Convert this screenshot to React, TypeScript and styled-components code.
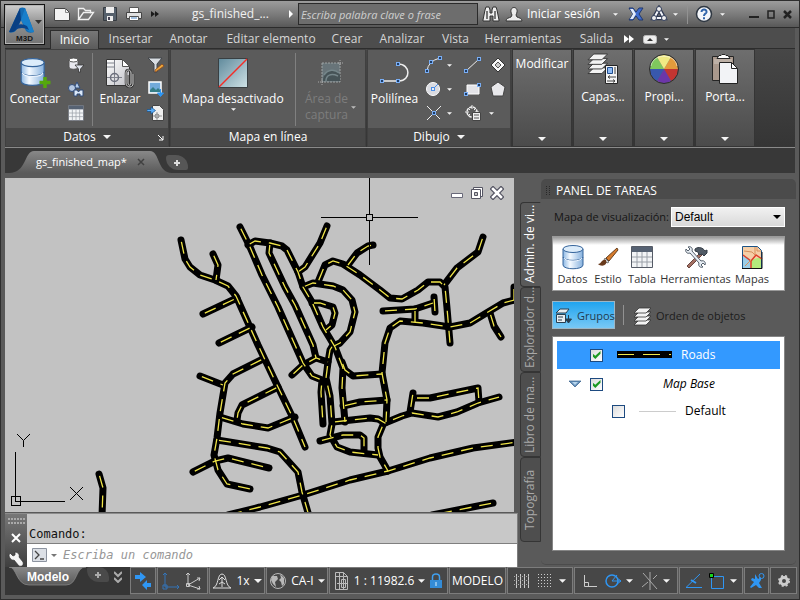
import React, { useState } from "react";
import styled, { createGlobalStyle, css } from "styled-components";

const Global = createGlobalStyle`
  * { box-sizing: border-box; }
  html, body { margin: 0; background: #5a5a5a; }
  body, button, input, select {
    font-family: "Open Sans", "Noto Sans", sans-serif;
    font-size: 12px;
    line-height: 16px;
  }
  button { border: 0; padding: 0; margin: 0; background: none; color: inherit; white-space: nowrap; }
  svg { display: block; flex: none; }
`;

/* ---------- window ---------- */

const Window = styled.div`
  position: relative;
  display: flex;
  flex-direction: column;
  height: 100vh;
  min-height: 600px;
  min-width: 800px;
  overflow: hidden;
  background: #5a5a5a;
  color: #fff;
  border: 1px solid #2e2e2e;
`;

const TitleBar = styled.header`
  display: flex;
  align-items: center;
  flex: none;
  height: 27px;
  padding: 0 3px 0 49px;
  background: linear-gradient(#9c9c9c, #7c7c7c 50%, #585858);
  border-bottom: 1px solid #2c2c2c;
`;

const AppButton = styled.button`
  position: absolute;
  left: 3px;
  top: 3px;
  z-index: 2;
  display: flex;
  flex-direction: column;
  align-items: center;
  width: 41px;
  height: 41px;
  padding-top: 2px;
  border: 1px solid #141414;
  background: linear-gradient(#cfcfcf, #8f8f8f 50%, #747474);
  box-shadow: inset 0 0 0 1px #b4b4b4;
  color: #151515;
  font: bold 8px/9px "Liberation Sans", sans-serif;
`;

const BarButton = styled.button<{ $w: number; $h?: number }>`
  display: flex;
  align-items: center;
  justify-content: center;
  flex: none;
  width: ${(p) => p.$w}px;
  height: ${(p) => p.$h ?? 24}px;
`;

const DocTitle = styled.div`
  flex: 1;
  min-width: 0;
  padding-left: 13px;
  text-align: center;
  color: #f0f0f0;
  white-space: nowrap;
`;

const Search = styled.input`
  flex: none;
  width: 180px;
  height: 22px;
  padding: 0 2px;
  border: 1px solid #2b2b2b;
  background: #6d6d6d;
  color: #fff;
  font-style: italic;
  font-size: 11px;
  &::placeholder { color: #cfcfcf; opacity: 1; }
`;

const SignIn = styled.button`
  display: flex;
  align-items: center;
  flex: none;
  gap: 4px;
  width: 104px;
  padding-left: 2px;
`;

const Separator = styled.span`
  flex: none;
  width: 1px;
  height: 20px;
  margin: 0 5px;
  background: #929292;
`;

const WindowControls = styled.div`
  display: flex;
  margin-left: 16px;
`;

/* ---------- ribbon ---------- */

const Menu = styled.nav`
  display: flex;
  align-items: flex-end;
  flex: none;
  height: 21px;
  margin: 0 4px;
  padding-left: 45px;
  background: #4d4d4d;
  border-bottom: 1px solid #2d2d2d;
`;

const MenuTab = styled.button<{ $w: number; $active?: boolean }>`
  flex: none;
  width: ${(p) => p.$w}px;
  height: 18px;
  color: #d6d6d6;
  ${(p) =>
    p.$active &&
    css`
      height: 19px;
      margin-bottom: -1px;
      padding-bottom: 2px;
      line-height: 15px;
      color: #fff;
      border: 1px solid #2d2d2d;
      border-bottom: 0;
      background: linear-gradient(#777, #5b5b5b);
    `}
`;

const Ribbon = styled.section`
  display: flex;
  flex: none;
  gap: 1px;
  height: 99px;
  margin: 0 4px;
  background: linear-gradient(#474747, #353535);
  border-bottom: 1px solid #8a8a8a;
`;

const Panel = styled.div<{ $w: number }>`
  display: flex;
  flex-direction: column;
  flex: none;
  width: ${(p) => p.$w}px;
  background: #5b5b5b;
  border: 1px solid #404040;
`;

const PanelBody = styled.div`
  display: flex;
  flex: 1;
  padding-top: 3px;
`;

const PanelFooter = styled.button`
  display: flex;
  align-items: center;
  justify-content: center;
  position: relative;
  gap: 7px;
  height: 18px;
  background: #484848;
`;

const Launcher = styled.span`
  position: absolute;
  right: 4px;
  top: 7px;
`;

const BigButton = styled.button<{ $w: number; $dim?: boolean }>`
  display: flex;
  flex-direction: column;
  align-items: center;
  flex: none;
  gap: 1px;
  width: ${(p) => p.$w}px;
  padding-top: 2px;
  color: ${(p) => (p.$dim ? "#7d7d7d" : "#fff")};
`;

const BigIcon = styled.span`
  display: flex;
  align-items: center;
  justify-content: center;
  height: 35px;
`;

const BigCaption = styled.span`
  display: flex;
  align-items: center;
  gap: 3px;
  white-space: pre;
  line-height: 16px;
`;

const Tools = styled.div<{ $cols: string }>`
  display: grid;
  grid-template-columns: ${(p) => p.$cols};
  grid-auto-rows: 24px;
  align-content: start;
  flex: none;
`;

const Tool = styled.button<{ $start?: boolean }>`
  display: flex;
  align-items: center;
  justify-content: ${(p) => (p.$start ? "flex-start" : "center")};
  gap: 4px;
`;

const Divider = styled.span`
  flex: none;
  width: 1px;
  height: 73px;
  background: #808080;
`;

const FoldedPanel = styled.button`
  display: flex;
  flex-direction: column;
  align-items: center;
  flex: none;
  width: 60px;
  height: 98px;
  padding: 6px 0 5px;
  overflow: hidden;
  border: 1px solid #353535;
  background: linear-gradient(#6e6e6e, #4b4b4b);
  & > :last-child { margin-top: auto; }
`;

const FoldedIcon = styled.span`
  display: flex;
  align-items: center;
  height: 32px;
  margin: -3px 0 4px;
`;

/* ---------- document tabs ---------- */

const DocTabs = styled.div`
  display: flex;
  align-items: flex-end;
  flex: none;
  height: 30px;
  margin: 0 4px;
  background: #383838;
  border-bottom: 5px solid #5a5a5a;
`;

const DocTab = styled.button`
  position: relative;
  display: flex;
  align-items: center;
  gap: 10px;
  width: 159px;
  height: 22px;
  padding-left: 31px;
  font-size: 11px;
  & > svg:first-child { position: absolute; left: 0; top: 0; }
  & > * { position: relative; }
`;

const NewTab = styled.button<{ $dark?: boolean }>`
  display: flex;
  align-items: center;
  justify-content: center;
  width: 22px;
  height: 15px;
  margin: 0 0 3px 2px;
  border-radius: ${(p) => (p.$dark ? "2px 10px 2px 12px" : "3px 12px 2px 12px")};
  background: ${(p) => (p.$dark ? "#4a4a4a" : "#565656")};
`;

/* ---------- work area ---------- */

const Work = styled.main`
  display: flex;
  flex: 1;
  min-height: 0;
  margin-left: 4px;
`;

const Left = styled.div`
  display: flex;
  flex-direction: column;
  flex: 1;
  min-width: 0;
`;

const Canvas = styled.div`
  position: relative;
  flex: 1;
  min-height: 0;
  margin-right: 4px;
  background: #c2c2c2;
  & > svg { width: 100%; height: 100%; }
`;

const CanvasControls = styled.div`
  position: absolute;
  top: 3px;
  right: 10px;
  display: flex;
  gap: 6px;
`;

const Command = styled.section`
  display: flex;
  flex: none;
  height: 54px;
  margin-top: 1px;
  border-top: 1px solid #8c8c8c;
  border-right: 1px solid #7d7d7d;
  font-family: "DejaVu Sans Mono", monospace;
`;

const CommandGutter = styled.div`
  display: flex;
  flex-direction: column;
  align-items: center;
  justify-content: space-between;
  width: 22px;
  padding: 4px 0 0;
  background: linear-gradient(#777, #3f3f3f);
`;

const CommandLines = styled.div`
  display: flex;
  flex-direction: column;
  flex: 1;
`;

const History = styled.div`
  flex: 1;
  padding: 12px 2px 0;
  background: #c8c8c8;
  color: #111;
  border-bottom: 1px solid #7f7f7f;
`;

const Prompt = styled.label`
  display: flex;
  align-items: center;
  gap: 3px;
  height: 23px;
  padding: 0 0 1px 5px;
  background: #fff;
`;

const CommandInput = styled.input`
  flex: 1;
  min-width: 0;
  height: 18px;
  padding: 0 3px;
  border: 0;
  font-family: "DejaVu Sans Mono", monospace;
  &::placeholder { color: #969696; font-style: italic; opacity: 1; }
`;

/* ---------- task pane ---------- */

const TaskArea = styled.aside`
  display: flex;
  flex: none;
  width: 281px;
  padding: 1px 3px 2px 2px;
`;

const SideTabs = styled.div`
  display: flex;
  flex-direction: column;
  width: 21px;
  padding-top: 23px;
`;

const SideTab = styled.button<{ $active?: boolean }>`
  height: 85px;
  writing-mode: vertical-rl;
  transform: rotate(180deg);
  padding: 3px 0 3px 2px;
  text-align: center;
  border: 1px solid #353535;
  border-radius: 0 4px 4px 0;
  background: ${(p) => (p.$active ? "#5a5a5a" : "#4e4e4e")};
  color: ${(p) => (p.$active ? "#fff" : "#a9a9a9")};
  ${(p) => p.$active && "border-left-color: #5a5a5a;"}
`;

const TaskPane = styled.div`
  display: flex;
  flex-direction: column;
  flex: 1;
  min-width: 0;
  border-bottom: 1px solid #4c4c4c;
  border-radius: 5px;
`;

const PaneTitle = styled.h2`
  display: flex;
  align-items: center;
  gap: 6px;
  height: 20px;
  margin: 0;
  padding: 3px 5px 0;
  font-size: 12px;
  font-weight: 400;
  background: #4b4b4b;
  border-radius: 5px 5px 0 0;
`;

const PaneBody = styled.div`
  display: flex;
  flex-direction: column;
  flex: 1;
  min-height: 0;
  padding: 8px 11px 13px 11px;
  color: #151515;
`;

const MapRow = styled.label`
  display: flex;
  align-items: center;
  justify-content: space-between;
  padding-left: 2px;
  font-size: 11px;
  white-space: nowrap;
`;

const SelectBox = styled.span`
  position: relative;
  display: flex;
  & > svg { position: absolute; right: 4px; top: 8px; pointer-events: none; }
`;

const MapSelect = styled.select`
  appearance: none;
  width: 114px;
  height: 20px;
  padding: 0 3px;
  border: 1px solid #fff;
  border-radius: 0;
  background: linear-gradient(#f1f1f1, #d9d9d9);
  color: #000;
  font-family: "Liberation Sans", sans-serif;
`;

const PaneTools = styled.div`
  display: flex;
  height: 55px;
  margin-top: 9px;
  padding: 6px 0 0 2px;
  border: 1px solid #9a9a9a;
  background: linear-gradient(#989898, #fff 8px);
`;

const PaneTool = styled.button<{ $w: number }>`
  display: flex;
  flex-direction: column;
  align-items: center;
  gap: 1px;
  width: ${(p) => p.$w}px;
  font-size: 11px;
  color: #333;
  & > svg { margin-top: 1px; }
`;

const ViewRow = styled.div`
  display: flex;
  align-items: center;
  gap: 3px;
  height: 28px;
  margin: 10px 0 7px;
`;

const ViewButton = styled.button<{ $active?: boolean }>`
  display: flex;
  align-items: center;
  gap: 4px;
  height: 28px;
  padding: 2px 3px 0 2px;
  font-size: 11px;
  color: #1c1c1c;
  ${(p) =>
    p.$active &&
    css`
      width: 63px;
      background: linear-gradient(#20a4ef, #78c8f5);
      border: 1px solid #9cb6c5;
      color: #203a50;
    `}
`;

const Tree = styled.ul`
  flex: 1;
  margin: 0;
  padding: 4px;
  list-style: none;
  background: #fff;
  border: 1px solid #858585;
  color: #000;
`;

const TreeRow = styled.li<{ $indent: number; $selected?: boolean; $h: number }>`
  display: flex;
  align-items: center;
  height: ${(p) => p.$h}px;
  padding-left: ${(p) => p.$indent}px;
  background: ${(p) => (p.$selected ? "#3399ff" : "transparent")};
  color: ${(p) => (p.$selected ? "#fff" : "#000")};
`;

const TreeLabel = styled.label<{ $italic?: boolean }>`
  display: flex;
  align-items: center;
  gap: 9px;
  font-style: ${(p) => (p.$italic ? "italic" : "normal")};
  & > svg { margin-left: 5px; }
  & > span { margin-left: ${(p) => (p.$italic ? "51px" : "0")}; }
`;

const Check = styled.input`
  appearance: none;
  display: grid;
  place-items: center;
  width: 13px;
  height: 13px;
  margin: 0;
  border: 1px solid #1d4a80;
  background: linear-gradient(135deg, #dcdcdc, #fff);
  &:checked::before {
    content: "";
    width: 8px;
    height: 8px;
    background: #1c9a22;
    clip-path: polygon(0 30%, 35% 60%, 100% 0, 100% 35%, 35% 100%, 0 65%);
  }
`;

/* ---------- status bar ---------- */

const StatusBar = styled.footer`
  display: flex;
  align-items: flex-start;
  flex: none;
  height: 28px;
  margin: 0 2px 4px 4px;
  background: #363636;
`;

const ModelTab = styled.button`
  position: relative;
  width: 80px;
  height: 19px;
  padding-left: 6px;
  font: bold 12px/18px "Liberation Sans", sans-serif;
  & > svg { position: absolute; left: 0; top: 0; }
  & > span { position: relative; }
`;

const StatusTools = styled.div`
  display: flex;
  flex: 1;
  gap: 1px;
  height: 28px;
  margin-left: 4px;
  background: #5a5a5a;
`;

const StatusGroup = styled.div<{ $w: number; $grow?: boolean }>`
  display: flex;
  align-items: center;
  justify-content: space-evenly;
  flex: ${(p) => (p.$grow ? 1 : "none")};
  min-width: ${(p) => p.$w}px;
  height: 27px;
  border: 1px solid #7c7c7c;
  background: #474747;
`;

const StatusButton = styled.button`
  display: flex;
  align-items: center;
  gap: 4px;
`;

/* ---------- glyphs ---------- */

const Down = ({ s = 6, c = "#f4f4f4" }: { s?: number; c?: string }) => (
  <svg width={s} height={Math.ceil(s / 2)} viewBox="0 0 8 4"><path d="M0 0h8L4 4z" fill={c} /></svg>
);

const Svg = ({ w = 18, h = 18, children }: { w?: number; h?: number; children: React.ReactNode }) => (
  <svg width={w} height={h} viewBox={`0 0 ${w} ${h}`} fill="none">{children}</svg>
);

const Grip = ({ x, y }: { x: number; y: number }) => (
  <rect x={x - 1.5} y={y - 1.5} width="3" height="3" fill="#1f3d66" stroke="#79aef5" />
);

const Database = ({ plus }: { plus?: boolean }) => (
  <Svg w={plus ? 32 : 22} h={plus ? 32 : 26}>
    <defs>
      <linearGradient id="db" x1="0" x2="1">
        <stop offset="0" stopColor="#8db8e4" /><stop offset=".35" stopColor="#f5faff" /><stop offset="1" stopColor="#86b1de" />
      </linearGradient>
    </defs>
    <g transform={plus ? "translate(1 1) scale(1.15)" : "translate(0 1)"}>
      <path d="M1 4v16c0 5 20 5 20 0V4" fill="url(#db)" stroke="#35649b" />
      <ellipse cx="11" cy="4" rx="10" ry="3.5" fill="#dcecfa" stroke="#35649b" />
      <path d="M1 12c0 4.500 20 4.500 20 0" stroke="#35649b" />
      <path d="M2 13c1 4 17 4 18 0" stroke="#eef6ff" />
    </g>
    {plus && <path d="M26 20v11M20.500 25.500h11" stroke="#55a80c" strokeWidth="3.500" />}
  </Svg>
);

const TableGlyph = ({ w = 18, h = 16 }: { w?: number; h?: number }) => (
  <svg width={w} height={h} viewBox="0 0 22 22" preserveAspectRatio="none" fill="none">
    <path d="M.5.5h21v21H.5z" fill="#f2f4f6" stroke="#555b66" />
    <path d="M1 1h20v5H1z" fill="#566273" />
    <path d="M1 11h20M1 16h20M6 6v15M11 6v15M16 6v15" stroke="#9aa0a8" />
  </svg>
);

const PageGlyph = () => (
  <Svg w={30} h={32}>
    <defs><linearGradient id="sheet" x2="1" y2="1"><stop stopColor="#fff" /><stop offset="1" stopColor="#bfc0c6" /></linearGradient></defs>
    <path d="M1.500 2.500h16l7 7v19h-23z" fill="url(#sheet)" stroke="#333" />
    <path d="M17.500 2.500v7h7z" fill="#fff" stroke="#555" />
    <path d="M2 6h7M2 10h7M9.500 3v25M2 20.500h15" stroke="#7f828c" />
    <circle cx="9.500" cy="20.500" r="4" stroke="#6b6f7c" strokeWidth="1.500" />
    <path d="M23 18v8c0 3 3 3 3 0V16c0-4-5-4-5 0v10c0 5 7 5 7 1V17" stroke="#333" strokeWidth="2.500" />
    <path d="M23 18v8c0 3 3 3 3 0V16c0-4-5-4-5 0v10c0 5 7 5 7 1V17" stroke="#d6d6d6" />
  </Svg>
);

const Layers = ({ page }: { page?: boolean }) => (
  <Svg w={page ? 32 : 18} h={page ? 32 : 19}>
    <g transform={page ? "translate(1 1) scale(1.15)" : "translate(0 1)"}>
      {[12, 8, 4, 0].map((y) => (
        <path key={y} d={`M0 ${y + 5}L5 ${y}h12l-5 5z`} fill="#f3f3f3" stroke="#333" strokeWidth=".8" />
      ))}
    </g>
    {page && (
      <>
        <path d="M18.500 12.500h12v18h-12z" fill="#f4f4f4" stroke="#252525" />
        <path d="M20.500 14.500h5v6h-5z" fill="#8fbbf4" stroke="#1e4c8e" />
        <path d="M28 14v7" stroke="#9a9a9a" strokeWidth="2" />
        <path d="M21 24h8M20 28h8M23 22.500L21 24l2 1.500M26 26.500l2 1.500-2 1.500" stroke="#444" />
      </>
    )}
  </Svg>
);

const Wheel = () => {
  const colors = ["#e49b3c", "#c33531", "#6c36a8", "#3858ad", "#7fc75d", "#f0ea84"];
  const starts = [-60, 0, 60, 120, 180, 240];
  const order = [0, 1, 2, 3, 4, 5];
  const point = (deg: number) => {
    const a = (deg * Math.PI) / 180;
    return `${16 + 14 * Math.cos(a)} ${16 + 14 * Math.sin(a)}`;
  };
  return (
    <Svg w={32} h={32}>
      {order.map((i) => (
        <path key={i} d={`M16 16L${point(starts[i])}A14 14 0 0 1 ${point(starts[i] + 60)}z`} fill={colors[i]} />
      ))}
      <circle cx="16" cy="16" r="14.500" stroke="#2d2d2d" />
      <path d="M3 13C5 0 27 0 29 13" stroke="#fff" strokeOpacity=".5" />
    </Svg>
  );
};

const Clipboard = () => (
  <Svg w={28} h={32}>
    <path d="M1.500 3.500h21v24h-21z" fill="#a9988c" stroke="#262626" />
    <path d="M3 6h18v5H3z" fill="#bdb0a6" />
    <path d="M6 5.500l2-3h2l1-1h3l1 1h2l2 3z" fill="#fff" stroke="#262626" />
    <path d="M8.500 9.500h12l6 6v15h-18z" fill="#f2f3f6" stroke="#222" />
    <path d="M20.500 9.500v6h6z" fill="#fff" stroke="#222" />
  </Svg>
);

const Wrench = () => (
  <Svg w={16} h={16}><path d="M2 2l3 3 2-1V1c3 0 5 3 4 5l4 5c1 3-1 5-4 4L6 9C4 10 1 7 1 4z" fill="#f5f5f5" stroke="#333" strokeWidth=".7" /></Svg>
);

/* ---------- map ---------- */

const roads = [
  "181,240 185,259 190,267 200,275 215,280 228,286 236,296 258,345 278,387 293,418 305,447",
  "213,254 218,265 216,280", "203,314 237,298", "219,343 252,327",
  "240,227 250,247 262,275 278,307 295,345 303,363 312,376 322,380 321,392 323,424",
  "248,245 255,241 270,243 282,246 287,250 298,272 303,287 312,302 323,327 335,347 343,368 342,388 345,422",
  "270,243 269,253 285,287 295,305 313,345 316,358",
  "292,375 303,365 316,358 328,362",
  "333,345 330,350 328,362 326,378 330,396 332,424 330,435 337,447 350,452 378,455",
  "327,226 320,243 305,267 298,272",
  "303,287 313,283 333,286 343,290 352,300 355,312 350,332 340,343 334,346",
  "318,282 325,265 333,261 343,264 360,275 380,290 390,298 402,299 418,290 428,282 440,282 445,287 447,308 450,343",
  "373,245 368,246 357,253 348,265",
  "483,237 478,252 457,268 444,285",
  "312,303 320,303 333,307 335,313 332,325 326,330",
  "383,311 415,309 433,303", "434,297 435,312", "415,309 415,322",
  "518,299 503,303 488,312 470,323 450,327 423,323 400,321 390,328 385,343 382,373 387,400 386,422",
  "490,313 494,326 501,337", "514,287 514,300",
  "342,362 345,370 353,376 382,374",
  "343,406 360,402 387,400",
  "333,422 370,418 378,419 385,423 402,416 412,413 438,417 457,412 478,403 499,397",
  "413,393 410,412", "415,398 430,398 478,388 479,402",
  "383,425 378,437 378,448 380,457 388,471",
  "320,441 343,435 360,435 364,438 364,451",
  "263,359 233,374 225,383 220,413 217,438 214,455 218,470 227,484 250,489",
  "200,376 223,385", "278,387 242,405 238,413 237,420",
  "220,417 243,424 268,428 295,417",
  "217,440 267,448 280,452 298,472 302,492 309,516",
  "193,472 215,461 228,458 269,468",
  "228,515 260,507 303,495 350,480 388,471 430,458 473,448 518,442",
  "493,503 432,515", "99,474 103,488 102,516",
];

const Map = () => (
  <svg aria-label="gs_finished_map" fill="none">
    <g transform="translate(-5 -178)">
      <g stroke="#000" strokeWidth="7" strokeLinecap="round" strokeLinejoin="round">
        {roads.map((r) => <polyline key={r} points={r} />)}
      </g>
      <g stroke="#f0e548" strokeWidth="1.300" strokeDasharray="12 8" strokeDashoffset="-2">
        {roads.map((r) => <polyline key={r} points={r} />)}
      </g>
      <g stroke="#000" shapeRendering="crispEdges">
        <path d="M321 217.500H366M373 217.500H418M369.500 178V214M369.500 221V265M366.500 214.500h6v6h-6z" />
        <path d="M15.500 452V501.500H65M11.500 496.500h9v9h-9z" />
      </g>
      <path d="M17 434l6.500 6.500L30 434M23.500 440.500V447M70 487l13 13M83 487l-13 13" stroke="#000" />
    </g>
  </svg>
);

const blue = "#2f96f3";

export default function App() {
  const [checks, setChecks] = useState([true, true, false]);
  const toggle = (i: number) => setChecks(checks.map((v, n) => (n === i ? !v : v)));

  return (
    <>
      <Global />
      <Window>
        <AppButton aria-label="M3D">
          <Svg w={37} h={27}>
            <path d="M14 1L3 25q5 2 8-3l4-9 5 11q3 3 8 1L19 1q-3-1-5 0z" fill="#126bb4" />
            <path d="M14 1l1 12-5 10q-3 3-7 2z" fill="#083f83" />
            <path d="M19 1l9 24q-5 1-7-2l-6-10z" fill="#187fcb" />
            <path d="M11 18q5-2 10 1l2 4q-7-4-14 0z" fill="#0b438a" />
            <path d="M29 13h7l-3.500 4z" fill="#333" />
          </Svg>
          M3D
        </AppButton>

        <TitleBar>
          <BarButton $w={24} aria-label="Nuevo"><Svg><path d="M1.500 3.500h11l4 4v8h-15z" fill="#f3f3f3" stroke="#444" /><path d="M12.500 3.500v4h4" stroke="#888" /></Svg></BarButton>
          <BarButton $w={24} aria-label="Abrir"><Svg><path d="M1.500 14.500v-11h5l2 2h5v3M1.500 14.500l5-7h10l-5 7z" fill="#777" stroke="#f0f0f0" strokeWidth="1.300" /></Svg></BarButton>
          <BarButton $w={24} aria-label="Guardar"><Svg><path d="M2.500 2.500h13v13h-13z" fill="#56616d" stroke="#363b41" /><path d="M5 2h8v6H5zM6 11h6v5H6z" fill="#eee" /><path d="M7 12h2v3H7z" fill="#445" /></Svg></BarButton>
          <BarButton $w={24} aria-label="Imprimir"><Svg><path d="M4.500 2.500h9v5h-9z" fill="#fff" stroke="#555" /><path d="M1.500 7.500h15v6h-15z" fill="#e1e1e1" stroke="#444" /><path d="M4.500 11.500h9v4h-9z" fill="#fff" stroke="#555" /><path d="M6 13h6" stroke="#4b84c3" /></Svg></BarButton>
          <BarButton $w={18} aria-label="Más"><Svg w={8} h={6}><path d="M0 0l4 3-4 3zM4 0l4 3-4 3z" fill="#1b1b1b" /></Svg></BarButton>
          <DocTitle>gs_finished_...</DocTitle>
          <BarButton $w={14} aria-label="Expandir"><Svg w={4} h={8}><path d="M0 0l4 4-4 4z" fill="#fff" /></Svg></BarButton>
          <Search aria-label="Buscar" placeholder="Escriba palabra clave o frase" />
          <BarButton $w={25} aria-label="Buscar"><Svg><path d="M3 5l1-3h3l1 3v3h2V5l1-3h3l1 3 2 10v1h-6v-5H8v5H1v-1z" fill="#eee" stroke="#333" /><path d="M4 6h2v8H4zM12 6h2v8h-2z" fill="#777" /></Svg></BarButton>
          <SignIn><Svg><path d="M1 16c0-3 3-3 5-4l1-2c-5-10 9-10 4 0l1 2c2 1 5 1 5 4z" fill="#ededed" stroke="#363636" /></Svg>Iniciar sesión</SignIn>
          <BarButton $w={16} aria-label="Opciones de sesión"><Down s={5} /></BarButton>
          <BarButton $w={25} aria-label="Exchange"><Svg w={16} h={14}><path d="M1 1h4l3 4 3-4h4l-4 6 4 6h-4L8 9l-3 4H1l4-6z" fill="#3f6bcd" stroke="#20386e" /><path d="M2 2h3l3 5-3 5H2l3-5z" fill="#e4ecfb" /></Svg></BarButton>
          <BarButton $w={21} aria-label="A360"><Svg><path d="M9 4L4 13h10z" stroke="#2f3952" strokeWidth="4.500" /><path d="M9 4L4 13h10z" stroke="#f4f6fb" strokeWidth="2" /><g fill="#eee" stroke="#34405d"><circle cx="9" cy="4" r="2.500" /><circle cx="4" cy="13" r="2.500" /><circle cx="14" cy="13" r="2.500" /></g></Svg></BarButton>
          <BarButton $w={13} aria-label="Opciones de A360"><Down s={5} /></BarButton>
          <Separator />
          <BarButton $w={22} aria-label="Ayuda"><Svg><circle cx="9" cy="9" r="7.500" fill="#f4f6fa" stroke="#2e3742" strokeWidth="1.500" /><path d="M6.500 7C6.500 3.500 12 4 11.500 7.200 11 9 9 8.500 9 11M9 12.200v2" stroke="#3265aa" strokeWidth="2" /></Svg></BarButton>
          <BarButton $w={14} aria-label="Opciones de ayuda"><Down s={5} /></BarButton>
          <WindowControls>
            <BarButton $w={17} aria-label="Minimizar"><Svg w={10} h={10}><path d="M0 8h10" stroke="#222" strokeWidth="2" /></Svg></BarButton>
            <BarButton $w={17} aria-label="Maximizar"><Svg w={8} h={9}><path d="M1 1h6v7H1z" stroke="#222" strokeWidth="1.500" /></Svg></BarButton>
            <BarButton $w={17} aria-label="Cerrar"><Svg w={9} h={9}><path d="M1 1l7 7M8 1L1 8" stroke="#222" strokeWidth="2.500" /></Svg></BarButton>
          </WindowControls>
        </TitleBar>

        <Menu>
          <MenuTab $w={49} $active>Inicio</MenuTab>
          <MenuTab $w={63}>Insertar</MenuTab>
          <MenuTab $w={53}>Anotar</MenuTab>
          <MenuTab $w={112}>Editar elemento</MenuTab>
          <MenuTab $w={40}>Crear</MenuTab>
          <MenuTab $w={70}>Analizar</MenuTab>
          <MenuTab $w={37}>Vista</MenuTab>
          <MenuTab $w={98}>Herramientas</MenuTab>
          <MenuTab $w={49}>Salida</MenuTab>
          <BarButton $w={16} $h={18} aria-label="Más fichas"><Svg w={10} h={8}><path d="M0 0l5 4-5 4zM5 0l5 4-5 4z" fill="#fff" /></Svg></BarButton>
          <BarButton $w={26} $h={18} aria-label="Contraer cinta"><Svg w={14} h={9}><rect x=".5" y=".5" width="13" height="8" rx="2" fill="#eee" stroke="#bbb" /><path d="M4 6h6L7 3z" fill="#333" /></Svg></BarButton>
          <BarButton $w={6} $h={18} aria-label="Opciones de cinta"><Down s={5} /></BarButton>
        </Menu>

        <Ribbon>
          <Panel $w={164}>
            <PanelBody>
              <BigButton $w={58}><BigIcon><Database plus /></BigIcon><BigCaption>Conectar</BigCaption></BigButton>
              <Tools $cols="23px">
                <Tool aria-label="Filtrar datos"><Svg><path d="M2 4v7c0 3 9 3 9 0V4" fill="#e8e8ee" stroke="#555" /><ellipse cx="6.500" cy="4" rx="4.500" ry="2" fill="#fff" stroke="#555" /><path d="M8 9h9l-3.500 4v3h-2v-3z" fill="#dfe3ec" stroke="#333" strokeWidth=".8" /></Svg></Tool>
                <Tool aria-label="Buscar entidades"><Svg><path d="M10 2l3 6H7z" fill="#b5cdea" stroke="#2f4a78" /><circle cx="5" cy="8" r="3.500" fill="#b5c8e2" stroke="#2f4a78" /><path d="M7 16v-6h3l1.500 2L13 10h3v6h-3v-2h-3v2z" fill="#dce9f9" stroke="#2f4a78" /></Svg></Tool>
                <Tool aria-label="Tabla de datos"><TableGlyph w={16} h={16} /></Tool>
              </Tools>
              <Tools $cols="5px" />
              <Divider />
              <BigButton $w={54}><BigIcon><PageGlyph /></BigIcon><BigCaption>Enlazar</BigCaption></BigButton>
              <Tools $cols="18px">
                <Tool aria-label="Consulta"><Svg><path d="M1 2h14l-5 6v8H7V8z" fill="#d8dde2" stroke="#42464b" /><path d="M8 14l7-6 2 2-7 5-2 1z" fill="#eda63a" stroke="#8d4a20" strokeWidth=".8" /></Svg></Tool>
                <Tool aria-label="Insertar imagen"><Svg><path d="M2 2h12v11H2z" fill="#72aada" stroke="#fff" strokeWidth="1.500" /><path d="M3 10l3-3 3 3 2-2 2 2v2H3z" fill="#357e88" /><path d="M13.500 9v6M10.500 13l3 3.500 3-3.500z" fill={blue} stroke={blue} /></Svg></Tool>
                <Tool aria-label="Importar mapa"><Svg><path d="M5.500 1.500h7l4 4v11h-11z" fill="#eee" stroke="#444" /><circle cx="10" cy="12" r="2" stroke="#777" /><path d="M10 8v8M6 12h9" stroke="#999" /><path d="M0 5.500h4V3l4.500 3.500L4 10V7.500H0z" fill="#5baef9" stroke="#164e86" strokeWidth=".7" /></Svg></Tool>
              </Tools>
            </PanelBody>
            <PanelFooter>Datos <Down s={8} /><Launcher><Svg w={6} h={6}><path d="M0 0l5 5M5 1v4H1" stroke="#fff" /></Svg></Launcher></PanelFooter>
          </Panel>

          <Panel $w={196}>
            <PanelBody>
              <BigButton $w={124}><BigIcon><Svg w={32} h={32}><defs><linearGradient id="sky" x2="1" y2="1"><stop stopColor="#608a9c" /><stop offset="1" stopColor="#cfe2e6" /></linearGradient></defs><path d="M1.500 1.500h29v29h-29z" fill="url(#sky)" stroke="#393f42" /><path d="M2 30L30 2" stroke="#f52d26" strokeWidth="1.500" /></Svg></BigIcon><BigCaption>Mapa desactivado</BigCaption><Down s={5} /></BigButton>
              <Divider />
              <BigButton $w={69} $dim disabled><BigIcon><Svg w={26} h={26}><path d="M4 3h18v19H4z" fill="#687479" stroke="#9da3a4" strokeDasharray="2 1" /><path d="M5 20c1-13 15-12 17-5v6H5z" fill="#465357" /><path d="M6 15c4-6 11-6 15-2M8 21c0-6 5-8 12-5" stroke="#75868a" strokeWidth="1.500" /><path d="M4 20v6M0 22h5M22 0v5M20 3h5" stroke="#aaa" strokeDasharray="1 1" /></Svg></BigIcon><BigCaption>{"Área de\ncaptura"}<Down s={5} c="#bcbcbc" /></BigCaption></BigButton>
            </PanelBody>
            <PanelFooter>Mapa en línea</PanelFooter>
          </Panel>

          <Panel $w={144}>
            <PanelBody>
              <BigButton $w={53}><BigIcon><Svg w={32} h={28}><path d="M3 22h17c12 0 12-17-1-17" stroke="#eee" strokeWidth="1.500" /><Grip x={3} y={22} /><Grip x={19} y={22} /><Grip x={19} y={5} /></Svg></BigIcon><BigCaption>Polilínea</BigCaption></BigButton>
              <Tools $cols="35px 33px 17px">
                <Tool aria-label="Arco"><Svg><path d="M2 15Q3 5 15 2" stroke="#eee" /><Grip x={2} y={15} /><Grip x={6} y={6} /><Grip x={15} y={2} /></Svg><Down s={5} /></Tool>
                <Tool aria-label="Línea"><Svg><path d="M2 15L15 3" stroke="#eee" /><Grip x={2} y={15} /><Grip x={15} y={3} /></Svg></Tool>
                <Tool aria-label="Polígono de mapa"><Svg><path d="M9 2l7 7-7 7-7-7z" fill="#f7f7f7" stroke="#333" /><path d="M9 6l3 3-3 3-3-3z" fill="#ccc" stroke="#555" /></Svg></Tool>
                <Tool aria-label="Círculo"><Svg><circle cx="8" cy="9" r="6.500" fill="#dadbe1" stroke="#fff" /><path d="M8 9l5-5" stroke="#4b8ee7" /><rect x="6.500" y="7.500" width="3" height="3" fill="#e8eef8" stroke="#4b8ee7" /></Svg><Down s={5} /></Tool>
                <Tool aria-label="Rectángulo"><Svg><path d="M3 5h12v9H3z" fill="#e3e3e7" stroke="#fff" /><Grip x={2} y={14} /><Grip x={15} y={5} /></Svg></Tool>
                <Tool aria-label="Polígono"><Svg><path d="M9 2l7 5-2 9H4L2 7z" fill="#e8e8eb" stroke="#444" /></Svg></Tool>
                <Tool aria-label="Punto"><Svg><path d="M2 2l13 13M2 16L16 2" stroke="#eee" /><Grip x={9} y={9} /></Svg><Down s={5} /></Tool>
                <Tool aria-label="Coordenadas"><Svg><circle cx="8" cy="8" r="5" stroke="#eee" strokeWidth="1.500" strokeDasharray="3 1" /><path d="M8 1v4M1 8h4M11 8h4M4 4l2 2M12 4l-2 2M4 12l2-2" stroke="#eee" /><path d="M8.500 8.500h8v8h-8z" fill="#eee" stroke="#444" /><path d="M10 11h5M10 14h5" stroke="#555" /></Svg></Tool>
                <Tool $start aria-label="Más herramientas"><Down s={5} /></Tool>
              </Tools>
            </PanelBody>
            <PanelFooter>Dibujo <Down s={8} /></PanelFooter>
          </Panel>
          <FoldedPanel>Modificar<Down s={8} /></FoldedPanel>
          <FoldedPanel><FoldedIcon><Layers page /></FoldedIcon>Capas...<Down s={8} /></FoldedPanel>
          <FoldedPanel><FoldedIcon><Wheel /></FoldedIcon>Propi...<Down s={8} /></FoldedPanel>
          <FoldedPanel><FoldedIcon><Clipboard /></FoldedIcon>Porta...<Down s={8} /></FoldedPanel>
        </Ribbon>

        <DocTabs>
          <DocTab>
            <svg width="176" height="22" viewBox="0 0 176 22"><defs><linearGradient id="doc" x2="0" y2="1"><stop stopColor="#888" /><stop offset="1" stopColor="#5a5a5a" /></linearGradient></defs><path d="M4 22c18 0 15-22 25-22h116c10 0 7 22 22 22z" fill="url(#doc)" /></svg>
            <span>gs_finished_map*</span>
            <Svg w={8} h={8}><path d="M1 1l6 6M7 1L1 7" stroke="#414141" strokeWidth="1.500" /></Svg>
          </DocTab>
          <NewTab aria-label="Nuevo dibujo"><Svg w={8} h={8}><path d="M4 1v6M1 4h6" stroke="#ddd" strokeWidth="2" /></Svg></NewTab>
        </DocTabs>

        <Work>
          <Left>
            <Canvas>
              <Map />
              <CanvasControls>
                <BarButton $w={14} aria-label="Minimizar dibujo"><Svg w={14} h={14}><path d="M1.500 7.500h11v4h-11z" fill="#fff" stroke="#686878" /></Svg></BarButton>
                <BarButton $w={14} aria-label="Restaurar dibujo"><Svg w={14} h={14}><path d="M3.500 1.500h9v9h-9z" fill="#fff" stroke="#555563" /><path d="M1.500 3.500h9v9h-9z" fill="#fff" stroke="#555563" /><path d="M4.500 6.500h3v3h-3z" fill="#c2c2c2" stroke="#555563" /></Svg></BarButton>
                <BarButton $w={14} aria-label="Cerrar dibujo"><Svg w={14} h={14}><path d="M3 3l8 8M11 3l-8 8" stroke="#555563" strokeWidth="5" strokeLinecap="square" /><path d="M3 3l8 8M11 3l-8 8" stroke="#fff" strokeWidth="2.500" strokeLinecap="square" /></Svg></BarButton>
              </CanvasControls>
            </Canvas>
            <Command>
              <CommandGutter>
                <Svg w={18} h={6}><path d="M1 1h17M1 5h17" stroke="#aaa" strokeWidth="2" strokeDasharray="2 1" /></Svg>
                <button aria-label="Cerrar comando"><Svg w={10} h={10}><path d="M1 1l8 8M9 1L1 9" stroke="#fff" strokeWidth="2" /></Svg></button>
                <button aria-label="Personalizar"><Wrench /></button>
              </CommandGutter>
              <CommandLines>
                <History>Comando:</History>
                <Prompt>
                  <Svg w={16} h={14}><path d="M.5.5h14v13H.5z" fill="#dce0e6" stroke="#8d94a0" /><path d="M3 3l4 4-4 4M8 11h4" stroke="#444" strokeWidth="1.300" /></Svg>
                  <Down s={6} c="#777" />
                  <CommandInput aria-label="Comando" placeholder="Escriba un comando" />
                </Prompt>
              </CommandLines>
            </Command>
          </Left>

          <TaskArea>
            <SideTabs>
              <SideTab $active>Admin. de vi...</SideTab>
              <SideTab>Explorador d...</SideTab>
              <SideTab>Libro de ma...</SideTab>
              <SideTab>Topografía</SideTab>
            </SideTabs>
            <TaskPane>
              <PaneTitle><Svg w={4} h={10}><path d="M.5 0v10M3.500 0v10" stroke="#292929" strokeDasharray="1 1" /></Svg>PANEL DE TAREAS</PaneTitle>
              <PaneBody>
                <MapRow>
                  Mapa de visualización:
                  <SelectBox><MapSelect defaultValue="Default"><option>Default</option></MapSelect><Down s={8} c="#000" /></SelectBox>
                </MapRow>
                <PaneTools>
                  <PaneTool $w={35}><Database />Datos</PaneTool>
                  <PaneTool $w={36}><Svg w={22} h={26}><path d="M9 14L20 4l1 2-9 11z" fill="#d67b2c" stroke="#66401f" /><path d="M8 14l4 4-2 1-3-3z" fill="#ddd" stroke="#777" /><path d="M9 16c2 6-5 7-8 4 4 0 3-5 8-4z" fill="#693a1c" /></Svg>Estilo</PaneTool>
                  <PaneTool $w={32}><Svg w={22} h={26}><g transform="translate(0 2)"><TableGlyph w={22} h={22} /></g></Svg>Tabla</PaneTool>
                  <PaneTool $w={75}>
                    <Svg w={24} h={26}>
                      <path d="M3 22L16 9l2 2L5 24z" fill="#a47063" stroke="#6a4740" />
                      <path d="M11 5c4-3 8-1 10 2l2-1v3l-3 3-2-2-3 1-1-3-3-1z" fill="#515b66" stroke="#343c46" />
                      <path d="M2 5l2 2 2-2-2-2c3-1 5 1 4 4l9 10c3-1 5 1 4 4l-2-2-2 2 2 2c-3 1-5-1-4-4L6 9C3 10 1 8 2 5z" fill="#e7edf3" stroke="#56616d" />
                    </Svg>
                    Herramientas
                  </PaneTool>
                  <PaneTool $w={38}><Svg w={22} h={26}><path d="M1.500 2.500h15l4 4v18h-19z" fill="#f5cfa8" stroke="#1b5386" /><path d="M2 12l6 2 2 10H2z" fill="#9ccee8" /><path d="M10 16l10-3v11H10z" fill="#b3ea7c" /><path d="M2 11l8 6 5-6 6 4M10 17v8" stroke="#dd3e28" strokeWidth="1.500" /><path d="M3 7l8 1 3 3V3M4 22l6-6M16 3v4h4" stroke="#d7905d" /><path d="M1 24.500h20V8" stroke="#111" /></Svg>Mapas</PaneTool>
                </PaneTools>
                <ViewRow>
                  <ViewButton $active><Svg w={18} h={18}><path d="M1.500 7.500h9v8h-9zM1 6l4-4h9l-3 4z" fill="#e8eef2" stroke="#293f50" /><path d="M3 10h5M3 13h4M13.500 8v5M10.500 12l3 4 3-4z" fill="#293f50" stroke="#293f50" /></Svg>Grupos</ViewButton>
                  <Separator />
                  <ViewButton><Layers />Orden de objetos</ViewButton>
                </ViewRow>
                <Tree>
                  <TreeRow $indent={33} $h={28} $selected>
                    <TreeLabel><Check type="checkbox" checked={checks[0]} onChange={() => toggle(0)} /><Svg w={55} h={8}><path d="M0 0h55v7H0z" fill="#000" /><path d="M1 3.500h16M26 3.500h17M52 3.500h2" stroke="#f1e84b" /></Svg>Roads</TreeLabel>
                  </TreeRow>
                  <TreeRow $indent={12} $h={30}>
                    <Svg w={21} h={8}><path d="M0 1h12L6 7z" fill="#6691ba" stroke="#315b88" strokeWidth=".7" /><path d="M3 2h6L6 5z" fill="#b7d6ed" /></Svg>
                    <TreeLabel $italic><Check type="checkbox" checked={checks[1]} onChange={() => toggle(1)} /><span>Map Base</span></TreeLabel>
                  </TreeRow>
                  <TreeRow $indent={55} $h={24}>
                    <TreeLabel><Check type="checkbox" checked={checks[2]} onChange={() => toggle(2)} /><Svg w={37} h={8}><path d="M0 4.500h37" stroke="#ccc" /></Svg>Default</TreeLabel>
                  </TreeRow>
                </Tree>
              </PaneBody>
            </TaskPane>
          </TaskArea>
        </Work>

        <StatusBar>
          <ModelTab>
            <svg width="84" height="19" viewBox="0 0 84 19"><path d="M4 0c8 0 7 18 20 18h37c12 0 9-18 20-18z" fill="url(#doc)" stroke="#8c8c8c" strokeWidth=".7" /></svg>
            <span>Modelo</span>
          </ModelTab>
          <NewTab $dark aria-label="Nueva presentación"><Svg w={8} h={8}><path d="M4 1v6M1 4h6" stroke="#aaa" strokeWidth="2" /></Svg></NewTab>
          <BarButton $w={17} $h={20} aria-label="Más presentaciones"><Svg w={8} h={12}><path d="M0 1l4 4 4-4M0 7l4 4 4-4" stroke="#aaa" strokeWidth="2" /></Svg></BarButton>
          <StatusTools>
            <StatusGroup $w={26}><StatusButton aria-label="Sincronizar"><Svg><path d="M1 3h5V0l6 5-6 5V7H1zM17 11h-4V8l-5 5 5 5v-3h4z" fill={blue} /></Svg></StatusButton></StatusGroup>
            <StatusGroup $w={51}>
              <StatusButton aria-label="SCP"><Svg><path d="M3 1v14h14M1 13h4v4H1zM1 3l2-2 2 2M15 13l2 2-2 2" stroke="#3475b8" /></Svg></StatusButton>
              <StatusButton aria-label="Ejes"><Svg><path d="M3 1v12l12 4M3 13l12-7M1.500 11.500h3v3h-3zM12 6h3l-1 3M14 14l1 3h-3M1 3l2-2 2 2" stroke="#ccc" /></Svg></StatusButton>
            </StatusGroup>
            <StatusGroup $w={56}><StatusButton><Svg w={20}><path d="M1 16C7 14 5 2 10 2s3 12 9 14zM10 15V5M7 8l3-3 3 3M7 12l3-2 3 2" stroke="#ddd" /></Svg>1x<Down s={8} /></StatusButton></StatusGroup>
            <StatusGroup $w={62}><StatusButton><Svg><circle cx="9" cy="9" r="7.500" stroke="#b8b8b8" /><path d="M3 4l5 0 1 3-3 3 1 5-3-3-2-4zM11 2l4 4 0 6-2 2-1-4-2-2 2-2z" fill="#b8b8b8" /></Svg>CA-I<Down s={7} /></StatusButton></StatusGroup>
            <StatusGroup $w={119}>
              <StatusButton><Svg w={16}><path d="M1.500.5h8l4 4v13h-12zM1.500 4.500h8M5.500.5v17M7.500 7.500h4v8h-4zM3 11.500h10M9.500 5v12M9.500.5v4h4" stroke="#bbb" /></Svg>1 : 11982.6<Down s={7} /></StatusButton>
              <StatusButton aria-label="Bloquear escala"><Svg w={14} h={16}><path d="M3.500 7V4c0-4 7-4 7 0v3" stroke="#3f9fee" strokeWidth="1.500" /><path d="M1 7h12v8H1z" fill="#348cd7" /><path d="M7 9v4" stroke="#d9f1ff" /></Svg></StatusButton>
            </StatusGroup>
            <StatusGroup $w={57}><StatusButton>MODELO</StatusButton></StatusGroup>
            <StatusGroup $w={66}>
              <StatusButton aria-label="Rejilla"><Svg w={16}><path d="M2.500 2v14M6.500 2v14M10.500 2v14M14.500 2v14" stroke="#ccc" /><path d="M0 4.500h16M0 8.500h16M0 12.500h16" stroke="#aaa" strokeDasharray="1 1" /></Svg></StatusButton>
              <StatusButton aria-label="Forzar cursor"><Svg w={16}><path d="M1 2.500h14M1 5.500h14M1 8.500h14M1 11.500h14M1 14.500h14" stroke="#ccc" strokeDasharray="1 2" /></Svg></StatusButton>
              <Down s={7} />
            </StatusGroup>
            <StatusGroup $w={104}>
              <StatusButton aria-label="Orto"><Svg w={14}><path d="M1.500 3v11.500H14M1.500 10.500h4v4" stroke="#ccc" /></Svg></StatusButton>
              <StatusButton><Svg><circle cx="8" cy="9" r="6" stroke={blue} strokeWidth="1.500" /><path d="M8 9h9M8 9l5-6M13 6l4 3-4 3" stroke={blue} /></Svg><Down s={7} /></StatusButton>
              <StatusButton><Svg><path d="M2 1l14 16M9 0v18M1 15l6-5M12 7l4-4" stroke="#aaa" /></Svg><Down s={7} /></StatusButton>
            </StatusGroup>
            <StatusGroup $w={64}>
              <StatusButton aria-label="Rastreo"><Svg><path d="M1 15.500L15 2M1 15.500h16" stroke={blue} /><path d="M6 8l5 3" stroke={blue} strokeWidth="2" /></Svg></StatusButton>
              <StatusButton><Svg><path d="M3.500 4.500h12v12h-12z" stroke={blue} /><path d="M1.500 1.500h4v4h-4z" fill="#18d41c" stroke="#000" /></Svg><Down s={7} /></StatusButton>
            </StatusGroup>
            <StatusGroup $w={25}><StatusButton aria-label="Anotación"><Svg><path d="M7 2l3 5 3-2v3l-2 3 3 5h-3l-3-3-5 3-1-1 4-5-3-2 1-2 3 1z" fill={blue} /><circle cx="13.500" cy="4" r="2.500" stroke={blue} /></Svg></StatusButton></StatusGroup>
            <StatusGroup $w={24} $grow><StatusButton aria-label="Configuración"><Svg w={14} h={14}><circle cx="7" cy="7" r="3.500" stroke="#ccc" strokeWidth="3" /><circle cx="7" cy="7" r="5" stroke="#ccc" strokeWidth="2" strokeDasharray="2 2" /></Svg></StatusButton></StatusGroup>
          </StatusTools>
        </StatusBar>
      </Window>
    </>
  );
}
